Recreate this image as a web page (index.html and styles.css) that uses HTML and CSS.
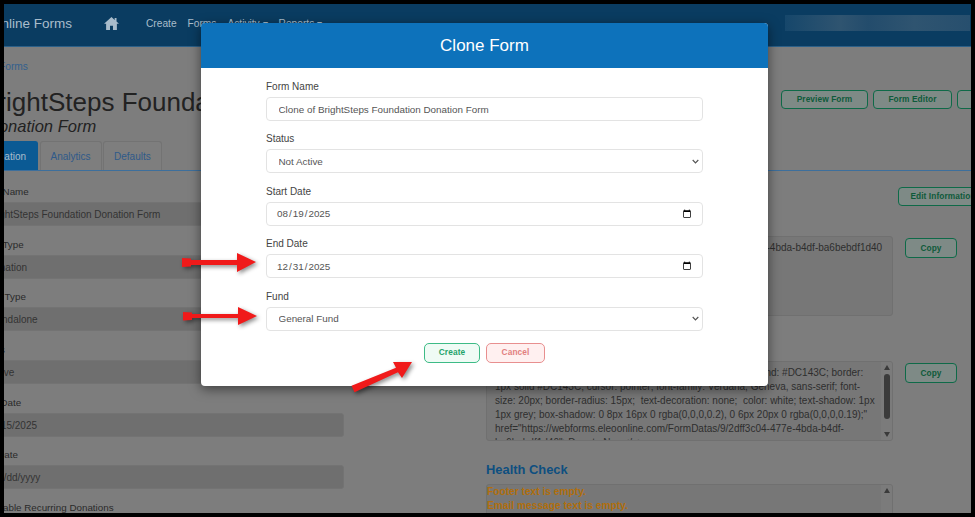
FILE: index.html
```html
<!DOCTYPE html>
<html lang="en">
<head>
    <meta charset="UTF-8">
    <meta name="viewport" content="width=device-width, initial-scale=1.0">
    <title>Clone Form</title>
    <link rel="stylesheet" href="styles.css">
</head>
<body>
    <div class="frame">
        <div class="page">
            <!-- dimmed page behind the dialog -->
            <div class="navbar">
                <div class="brand">Online Forms</div>
                <svg class="home-icon" viewBox="0 0 16 14" width="15" height="13"><path d="M8 0 0 7.2h2.2V14h4.2V9.3h3.2V14h4.2V7.2H16L13.4 4.9V1h-2v2.1z" fill="#a9bccb"/></svg>
                <div class="nav-link create-link">Create</div>
                <div class="nav-link">Forms</div>
                <div class="nav-link">Activity ▾</div>
                <div class="nav-link">Reports ▾</div>
                <div class="blurred-user"></div>
            </div>
            <div class="breadcrumb">Forms</div>
            <div class="title-row">
                <div class="title-text">
                    <div class="page-title">BrightSteps Foundation</div>
                    <div class="page-subtitle">Donation Form</div>
                </div>
                <div class="top-buttons">
                    <div class="green-btn preview-btn">Preview Form</div>
                    <div class="green-btn editor-btn">Form Editor</div>
                    <div class="green-btn more-btn">Clone</div>
                </div>
            </div>
            <div class="tabs">
                <div class="tab tab-active">Donation</div>
                <div class="tab">Analytics</div>
                <div class="tab">Defaults</div>
            </div>
            <div class="columns">
                <div class="left-col">
                    <div class="bg-label">Form Name</div>
                    <div class="bg-field">BrightSteps Foundation Donation Form</div>
                    <div class="bg-label">Form Type</div>
                    <div class="bg-field">Donation</div>
                    <div class="bg-label">Event Type</div>
                    <div class="bg-field">Standalone</div>
                    <div class="bg-label">Status</div>
                    <div class="bg-field">Active</div>
                    <div class="bg-label">Start Date</div>
                    <div class="bg-field">01/15/2025</div>
                    <div class="bg-label">End Date</div>
                    <div class="bg-field">mm/dd/yyyy</div>
                    <div class="bg-label check-label">Enable Recurring Donations</div>
                </div>
                <div class="right-col">
                    <div class="edit-row">
                        <div class="green-btn edit-btn">Edit Information</div>
                    </div>
                    <div class="copy-row first-copy-row">
                        <div class="link-box">https://webforms.eleoonline.com/FormDatas/9/2dff3c04-477e-4bda-b4df-ba6bebdf1d40</div>
                        <div class="green-btn copy-btn">Copy</div>
                    </div>
                    <div class="copy-row second-copy-row">
                        <div class="code-box">
                            <div class="code-text">
                                <div class="code-line">&lt;a style="display: inline-block; padding: 10px 20px; background: #DC143C; border:</div>
                                <div class="code-line">1px solid #DC143C; cursor: pointer; font-family: Verdana, Geneva, sans-serif; font-</div>
                                <div class="code-line">size: 20px; border-radius: 15px;&nbsp; text-decoration: none;&nbsp; color: white; text-shadow: 1px</div>
                                <div class="code-line">1px grey; box-shadow: 0 8px 16px 0 rgba(0,0,0,0.2), 0 6px 20px 0 rgba(0,0,0,0.19);"</div>
                                <div class="code-line">href="https://webforms.eleoonline.com/FormDatas/9/2dff3c04-477e-4bda-b4df-</div>
                                <div class="code-line">ba6bebdf1d40"&gt;Donate Now&lt;/a&gt;</div>
                            </div>
                            <div class="scrollbar">
                                <div class="arrow-up"></div>
                                <div class="thumb"></div>
                                <div class="arrow-down"></div>
                            </div>
                        </div>
                        <div class="green-btn copy-btn">Copy</div>
                    </div>
                    <div class="health-title">Health Check</div>
                    <div class="health-box">
                        <div class="code-text">
                            <div class="health-line">Footer text is empty.</div>
                            <div class="health-line">Email message text is empty.</div>
                        </div>
                        <div class="scrollbar">
                            <div class="arrow-up"></div>
                        </div>
                    </div>
                </div>
            </div>
        </div>

        <div class="modal">
            <div class="modal-header">Clone Form</div>
            <div class="modal-body">
                <label class="field-label">Form Name</label>
                <input class="field" type="text" value="Clone of BrightSteps Foundation Donation Form">
                <label class="field-label">Status</label>
                <select class="field">
                    <option>Not Active</option>
                </select>
                <label class="field-label">Start Date</label>
                <input class="field date-field" type="date" value="2025-08-19">
                <label class="field-label">End Date</label>
                <input class="field date-field" type="date" value="2025-12-31">
                <label class="field-label">Fund</label>
                <select class="field">
                    <option>General Fund</option>
                </select>
                <div class="modal-buttons">
                    <div class="create-btn">Create</div>
                    <div class="cancel-btn">Cancel</div>
                </div>
            </div>
        </div>

        <!-- red annotation arrows drawn on top of the screenshot -->
        <svg class="arrows" viewBox="4 4 967 509" width="967" height="509">
            <path d="M182 258l9 .5v1.500h46v-7l19 9-19 10v-7h-46v1.500l-9 .5z" fill="#f01a1a"/>
            <path d="M183 312l9 .5v1.500h46v-7l19 9-19 9v-7h-46v2l-9 .5z" fill="#f01a1a"/>
            <path d="M351.500 385.800 396 367.700 393 362H412L402 378 398 372.300 354.500 392.200z" fill="#f01a1a"/>
        </svg>
    </div>
</body>
</html>
```

FILE: styles.css
```css
* {
    box-sizing: border-box;
}

html,
body {
    margin: 0;
    background: #000;
}

body {
    font-family: "Liberation Sans", Arial, sans-serif;
    width: 975px;
    height: 517px;
    padding: 4px;
    overflow: hidden;
}

.frame {
    position: relative;
    width: 967px;
    height: 509px;
    overflow: hidden;
    background: #7d7d7d;
}

/* page behind the dialog */
.navbar {
    display: flex;
    align-items: center;
    height: 43px;
    padding-bottom: 3px;
    background: #0a3c61;
    border-bottom: 1px solid #2c6088;
    color: #a9bccb;
}

.brand {
    font-size: 13.5px;
    margin-left: -13px;
    width: 113px;
    white-space: nowrap;
}

.home-icon {
    margin-right: 27px;
}

.nav-link {
    font-size: 10.2px;
    margin-right: 11px;
    white-space: nowrap;
}

.blurred-user {
    position: absolute;
    left: 781px;
    top: 11px;
    width: 185px;
    height: 16px;
    background: linear-gradient(90deg, #16476b, #2f5470 30%, #234c6c 45%, #2f5470 70%, #274f6e);
}

.breadcrumb {
    font-size: 10.2px;
    color: #33608e;
    margin-top: 14px;
    margin-left: -5px;
}

.title-row {
    display: flex;
    justify-content: space-between;
    margin-top: 15px;
}

.title-text {
    margin-left: -24px;
}

.page-title {
    font-size: 26px;
    line-height: 30px;
    color: #222;
    white-space: nowrap;
}

.page-subtitle {
    font-size: 16.5px;
    line-height: 19px;
    font-style: italic;
    color: #222;
    margin-left: 7px;
}

.top-buttons {
    display: flex;
    gap: 5px;
    margin-top: 3px;
    margin-right: -46px;
}

.green-btn {
    height: 19px;
    line-height: 17.5px;
    font-size: 8.3px;
    font-weight: bold;
    letter-spacing: .1px;
    text-align: center;
    color: #0e5a3a;
    background: #7e8a86;
    border: 1px solid #0e6a48;
    border-radius: 4px;
    white-space: nowrap;
}

.preview-btn {
    width: 87px;
}

.editor-btn {
    width: 79px;
}

.more-btn {
    width: 60px;
}

.tabs {
    display: flex;
    gap: 1.5px;
    margin-top: 5px;
    margin-left: -30px;
    height: 30px;
    border-bottom: 1px solid #3d6f9c;
}

.tab {
    height: 29px;
    line-height: 29px;
    padding: 0 10px;
    font-size: 10px;
    color: #2f5a8a;
    background: #7e7e7e;
    border: 1px solid #737373;
    border-bottom: none;
    border-radius: 3px 3px 0 0;
}

.tab-active {
    width: 64px;
    text-align: right;
    padding: 0 11px 0 0;
    color: #a9bccb;
    background: #0b5a94;
    border-color: #0b5a94;
}

.columns {
    display: flex;
}

.left-col {
    flex: none;
    width: 365px;
    margin-left: -25px;
    padding-top: 13px;
}

.bg-label {
    font-size: 9.8px;
    line-height: 16px;
    color: #2a2a2a;
    height: 18px;
    margin-left: -2px;
    white-space: nowrap;
}

.check-label {
    padding-left: 14px;
}

.bg-field {
    height: 24px;
    line-height: 24px;
    font-size: 10px;
    padding-left: 7px;
    color: #333;
    background: #6f6f6f;
    border: 1px solid #737373;
    border-radius: 3px;
    margin-bottom: 10.7px;
    white-space: nowrap;
}

.right-col {
    flex: none;
    width: 500px;
    margin-left: 142px;
    padding-top: 16px;
}

.edit-row {
    display: flex;
    justify-content: flex-end;
    margin-right: -2px;
}

.edit-btn {
    width: 90px;
}

.copy-row {
    display: flex;
    gap: 12px;
    align-items: flex-start;
}

.first-copy-row {
    margin-top: 30px;
}

.second-copy-row {
    margin-top: 45px;
}

.link-box {
    width: 407px;
    height: 80px;
    padding: 4px 12px 4px 9px;
    font-size: 10px;
    line-height: 14px;
    text-align: right;
    color: #2e2e2e;
    background: #777;
    border: 1px solid #707070;
    border-radius: 3px;
    white-space: nowrap;
    overflow: hidden;
}

.copy-btn {
    width: 52px;
    height: 20px;
    line-height: 18px;
    margin-top: 1.5px;
}

.code-box {
    display: flex;
    width: 407px;
    height: 80px;
    background: #777;
    border: 1px solid #707070;
    border-radius: 3px;
    overflow: hidden;
}

.code-text {
    flex: 1;
    min-width: 0;
    overflow: hidden;
}

.code-line {
    font-size: 10px;
    line-height: 14px;
    color: #2e2e2e;
    padding-left: 8px;
    white-space: nowrap;
}

.code-line:first-child {
    margin-top: 4px;
}

.scrollbar {
    display: flex;
    flex-direction: column;
    align-items: center;
    width: 11px;
    padding: 3px 0;
    background: #7b7b7b;
}

.arrow-up,
.arrow-down {
    width: 0;
    height: 0;
    border-left: 3.5px solid transparent;
    border-right: 3.5px solid transparent;
}

.arrow-up {
    border-bottom: 5px solid #3a3a3a;
}

.arrow-down {
    border-top: 5px solid #3a3a3a;
    margin-top: auto;
}

.thumb {
    width: 6px;
    height: 45px;
    margin-top: 4px;
    border-radius: 3px;
    background: #3b3b3b;
}

.health-title {
    margin-top: 21px;
    font-size: 12.9px;
    font-weight: bold;
    line-height: 16px;
    color: #0e4f80;
}

.health-box {
    display: flex;
    width: 407px;
    height: 40px;
    margin-top: 6px;
    background: #777;
    border: 1px solid #707070;
    border-radius: 3px 3px 0 0;
    overflow: hidden;
}

.health-line {
    font-size: 10.2px;
    font-weight: bold;
    line-height: 14px;
    color: #b06e0c;
}

/* clone dialog */
.modal {
    position: absolute;
    left: 197px;
    top: 19px;
    width: 567px;
    height: 363px;
    background: #fff;
    border-radius: 4px;
    overflow: hidden;
    box-shadow: 0 3px 12px rgba(0, 0, 0, .5);
}

.modal-header {
    height: 45px;
    line-height: 45px;
    text-align: center;
    font-size: 17px;
    color: #fff;
    background: #0d72bb;
}

.modal-body {
    display: flex;
    flex-direction: column;
    width: 437px;
    margin: 0 auto;
    padding-top: 10px;
}

.field-label {
    height: 19px;
    line-height: 17px;
    font-size: 10px;
    color: #444;
}

.field {
    width: 100%;
    height: 24px;
    margin: 0 0 9.4px 0;
    padding: 0 11.5px;
    font-family: "Liberation Sans", Arial, sans-serif;
    font-size: 9.85px;
    color: #555;
    background: #fff;
    border: 1.5px solid #e3e3e3;
    border-radius: 4px;
    outline: none;
}

.date-field {
    padding: 0 8px 0 9px;
}

select.field {
    appearance: none;
    padding-left: 11.5px;
    background: #fff url("data:image/svg+xml,%3Csvg xmlns='http://www.w3.org/2000/svg' width='7' height='5' viewBox='0 0 7 5'%3E%3Cpath d='M.7 1 3.500 3.800 6.300 1' fill='none' stroke='%23555' stroke-width='1.200'/%3E%3C/svg%3E") no-repeat right 3px center;
}

.modal-buttons {
    display: flex;
    justify-content: center;
    gap: 6px;
    margin-top: 3px;
}

.create-btn,
.cancel-btn {
    height: 20px;
    line-height: 17.5px;
    font-size: 8.3px;
    font-weight: bold;
    letter-spacing: .1px;
    text-align: center;
    border-radius: 5px;
}

.create-btn {
    width: 56px;
    color: #1fa36a;
    background: #effbf5;
    border: 1.5px solid #3dbb86;
}

.cancel-btn {
    width: 59px;
    color: #e27f7f;
    background: #fff0f0;
    border: 1.5px solid #e88f8f;
}

.arrows {
    position: absolute;
    left: 0;
    top: 0;
    pointer-events: none;
    filter: drop-shadow(2px 2px 2px rgba(0, 0, 0, .45));
}
```
